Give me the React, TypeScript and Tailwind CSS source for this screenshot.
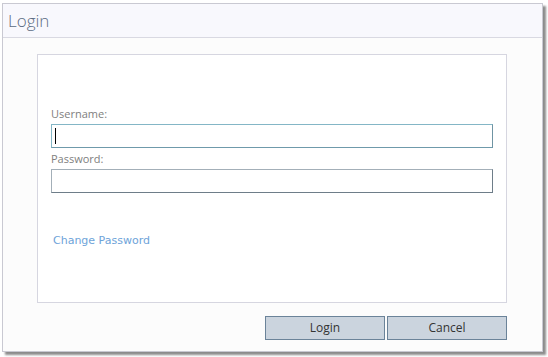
import React from 'react';

export default function App() {
  return (
    <div className="h-[357px] w-[548px] bg-white pl-[2px] pt-[3px]">
      <div
        className="flex h-[349px] w-[541px] flex-col border border-[#c9c9d2] bg-[#fcfcfc] shadow-[3px_3px_2px_rgba(0,0,0,0.45)]"
        style={{ fontFamily: '"Open Sans", "Liberation Sans", sans-serif' }}
      >
        {/* Title bar */}
        <div className="flex h-[34px] items-center border-b border-[#d9d9e2] bg-[#f8f8fd] pl-[5px]">
          <span className="text-[17px] font-light leading-none text-[#5b6b82]">Login</span>
        </div>

        {/* Body */}
        <div className="flex flex-1 flex-col pl-[34px] pr-[35px] pt-[16px]">
          <div className="h-[249px] border border-[#d6d6e0] bg-white px-[13px] pt-[52px]">
            <label className="block text-[11px] leading-[14px] text-[#808080]">Username:</label>
            <div className="mt-[3px] flex h-[24px] items-center border border-[#84b6c6] border-b-[#6f9aab] border-r-[#6f94a3] bg-white pl-[3px]">
              <span className="h-[16px] w-[1px] bg-black" />
            </div>
            <label className="mt-[4px] block text-[11px] leading-[14px] text-[#808080]">Password:</label>
            <div className="mt-[3px] h-[24px] border border-[#a3afb8] border-b-[#6e7d89] border-r-[#6e7d89] bg-white" />
            <div className="mt-[33px] pl-[2px]">
              <a
                className="text-[11px] leading-[13px] text-[#6ea3d9]"
                style={{ fontFamily: '"DejaVu Sans", Verdana, sans-serif' }}
              >
                Change Password
              </a>
            </div>
          </div>

          <div className="mt-[13px] flex justify-end gap-[2px]">
            <button className="h-[24px] w-[120px] border border-[#6b8399] bg-[#cbd4de] text-[12px] text-[#333]">
              Login
            </button>
            <button className="h-[24px] w-[120px] border border-[#6b8399] bg-[#cbd4de] text-[12px] text-[#333]">
              Cancel
            </button>
          </div>
        </div>
      </div>
    </div>
  );
}
